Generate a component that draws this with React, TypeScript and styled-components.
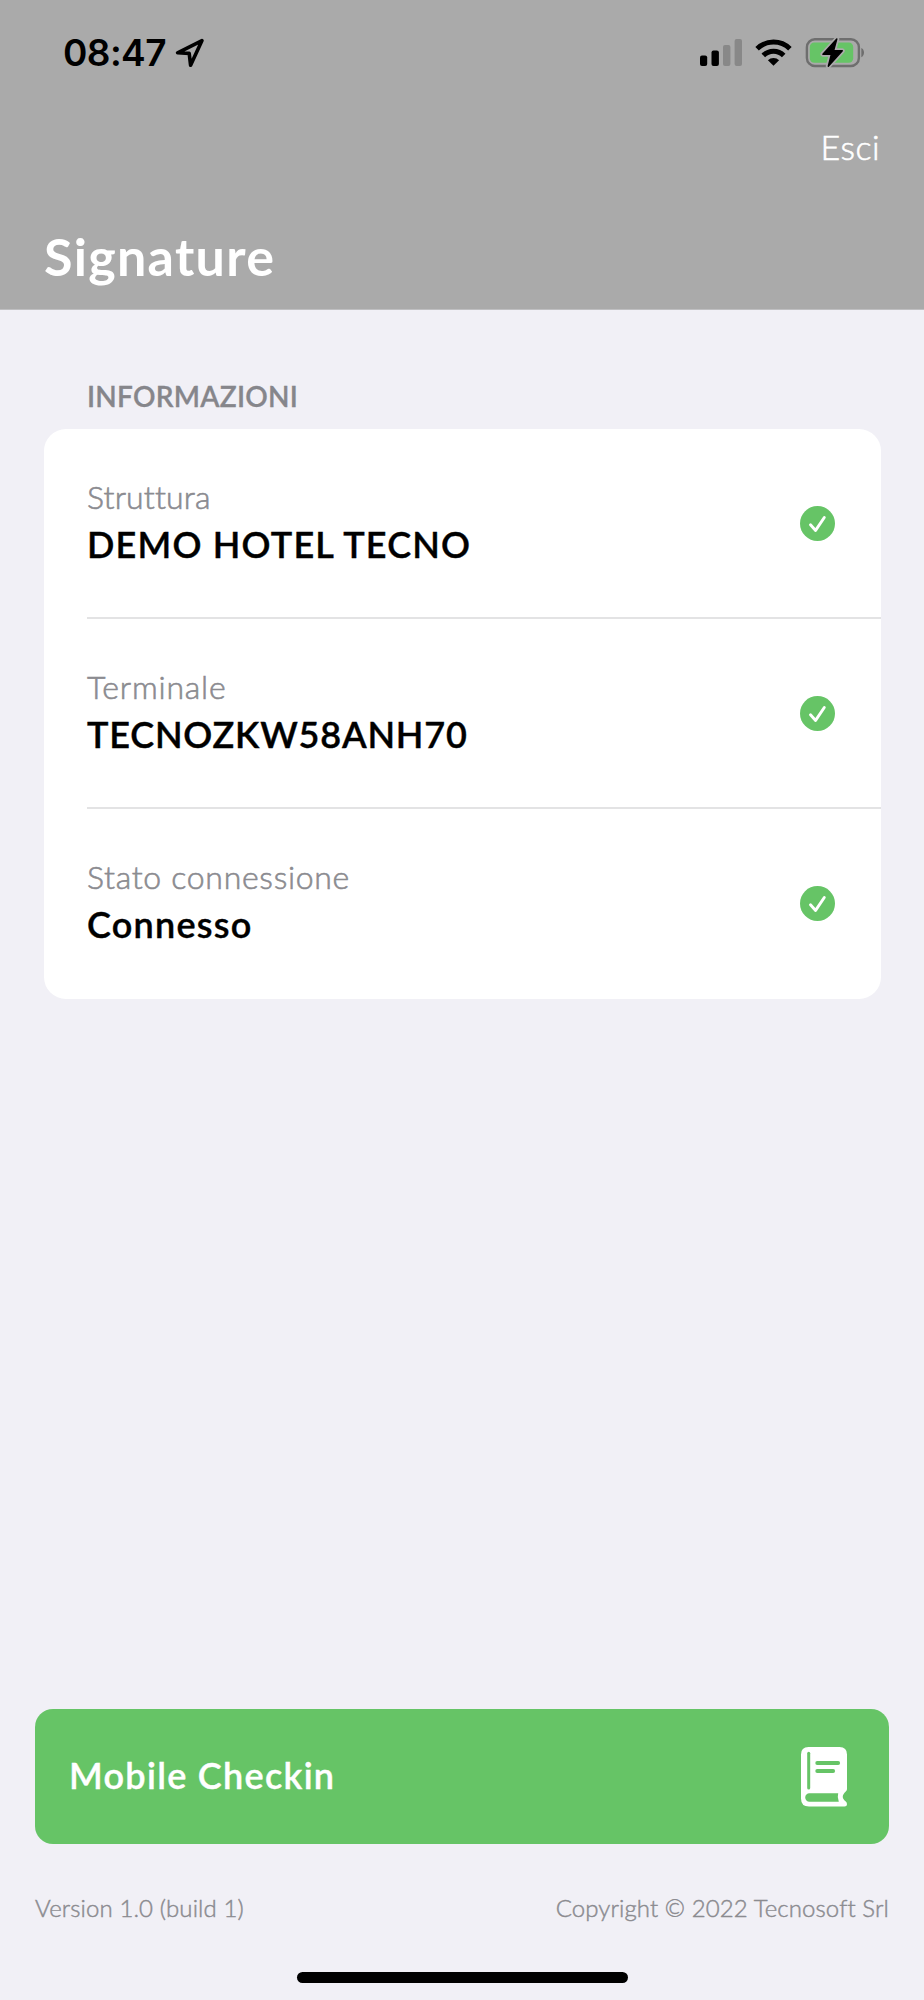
import React from 'react';
import styled, { createGlobalStyle } from 'styled-components';

const GREEN = '#66c466';

const GlobalStyle = createGlobalStyle`
  html, body { margin: 0; padding: 0; background: #f1f0f6; }
  *, *::before, *::after { box-sizing: border-box; }
`;

const Screen = styled.div`
  display: flex;
  flex-direction: column;
  width: 924px;
  height: 2000px;
  background: #f1f0f6;
  font-family: Lato, 'Liberation Sans', sans-serif;
  font-variant-ligatures: none;
  white-space: nowrap;
`;

const Header = styled.header`
  display: flex;
  flex-direction: column;
  height: 310px;
  background: #aaaaaa;
  border-bottom: 1px solid #bfbfc1;
`;

const StatusBar = styled.div`
  display: flex;
  justify-content: space-between;
  align-items: center;
  height: 105px;
  padding: 0 59px 0 63px;
`;

const StatusGroup = styled.div<{ $gap: number }>`
  display: flex;
  align-items: center;
  gap: ${(p) => p.$gap}px;
`;

const Clock = styled.span`
  font: 600 37px/44px Inter, 'Liberation Sans', sans-serif;
  letter-spacing: -0.6px;
  color: #000;
`;

const NavBar = styled.nav`
  display: flex;
  justify-content: flex-end;
  align-items: flex-end;
  height: 62px;
  padding-right: 44px;
`;

const ExitButton = styled.button`
  padding: 0;
  border: 0;
  background: none;
  color: #fff;
  font: 300 34px/40px Lato, sans-serif;
  letter-spacing: 0.5px;
  -webkit-text-stroke: 0.6px #fff;
`;

const PageTitle = styled.h1`
  margin: 59px 0 0 44px;
  color: #fff;
  font-size: 52px;
  font-weight: 700;
  line-height: 60px;
  letter-spacing: 1.3px;
`;

const Content = styled.main`
  flex: 1;
  padding: 69px 43px 0 44px;
`;

const SectionTitle = styled.h2`
  margin: 0 0 16px 43px;
  color: #86868b;
  font-size: 28px;
  font-weight: 600;
  line-height: 34px;
  letter-spacing: 0.25px;
  -webkit-text-stroke: 0.3px #86868b;
`;

const Card = styled.section`
  border-radius: 22px;
  background: #fff;
  padding-left: 43px;
`;

const Row = styled.div`
  display: flex;
  justify-content: space-between;
  align-items: center;
  height: 190px;
  padding-right: 46px;
  border-bottom: 2px solid #e3e3e4;
  &:last-child {
    border-bottom-color: transparent;
  }
`;

const RowText = styled.div`
  display: flex;
  flex-direction: column;
  gap: 3px;
  padding-bottom: 1px;
`;

const Label = styled.span<{ $tracking: number }>`
  color: #8b8b90;
  font-size: 32px;
  font-weight: 300;
  line-height: 40px;
  letter-spacing: ${(p) => p.$tracking}px;
  -webkit-text-stroke: 0.6px #8b8b90;
`;

const Value = styled.span<{ $tracking: number }>`
  color: #000;
  font-size: 36px;
  font-weight: 600;
  line-height: 48px;
  letter-spacing: ${(p) => p.$tracking}px;
  -webkit-text-stroke: 0.4px #000;
`;

const BottomArea = styled.footer`
  display: flex;
  flex-direction: column;
  align-items: stretch;
  height: 291px;
  padding: 0 35px;
`;

const PrimaryButton = styled.button`
  display: flex;
  justify-content: space-between;
  align-items: center;
  height: 135px;
  padding: 0 41px 0 34px;
  border: 0;
  border-radius: 18px;
  background: ${GREEN};
  color: #fff;
`;

const ButtonLabel = styled.span`
  padding-bottom: 3px;
  font: 600 36px/48px Lato, sans-serif;
  letter-spacing: 1.3px;
  -webkit-text-stroke: 0.4px #fff;
`;

const Legal = styled.div`
  display: flex;
  justify-content: space-between;
  margin-top: 49px;
  color: #8b8b90;
  font-size: 24px;
  font-weight: 300;
  line-height: 30px;
  letter-spacing: 0.1px;
  -webkit-text-stroke: 0.45px #8b8b90;
`;

const HomeIndicator = styled.div`
  align-self: center;
  width: 331px;
  height: 11px;
  margin-top: 49px;
  border-radius: 6px;
  background: #000;
`;

const LocationArrow = () => (
  <svg width="30" height="30" viewBox="0 0 30 30" fill="none" stroke="#000" strokeWidth="3.6" strokeLinejoin="round">
    <path d="M27 2.6 L2.6 14.8 L14.2 15.4 L15.6 27.2 Z" />
  </svg>
);

const Signal = () => (
  <svg width="42" height="28" viewBox="0 0 42 28">
    <rect x="0" y="16.5" width="7.2" height="10.5" rx="2" fill="#000" />
    <rect x="11.5" y="11.5" width="7.4" height="15.5" rx="2" fill="#000" />
    <rect x="23" y="6" width="7.4" height="21" rx="2" fill="#888" />
    <rect x="34.6" y="0" width="7.4" height="27" rx="2" fill="#888" />
  </svg>
);

const Wifi = () => (
  <svg width="37" height="28" viewBox="0 0 37 28">
    <g fill="none" stroke="#000" strokeWidth="5">
      <path d="M2.1 9.8 A23.4 23.4 0 0 1 34.9 9.8" />
      <path d="M8.3 16.4 A14.4 14.4 0 0 1 28.7 16.4" />
    </g>
    <path d="M18.5 26.8 L12.9 21.3 A8 8 0 0 1 24.1 21.3 Z" fill="#000" />
  </svg>
);

const Battery = () => (
  <svg width="60" height="31" viewBox="0 0 60 31">
    <rect x="1.9" y="2.2" width="52" height="26.8" rx="8" fill="none" stroke="#6e6e6e" strokeWidth="2.4" />
    <rect x="4.8" y="5.4" width="43.4" height="20.4" rx="4.5" fill={GREEN} />
    <path d="M56.3 11 C59.9 12.4 59.9 18.8 56.3 20.2 Z" fill="#6e6e6e" />
    <path
      d="M31.8 2.2 L17.9 17.2 H26.4 L23.3 29 L37.3 13.8 H28.6 Z"
      fill="#aaa"
      stroke="#aaa"
      strokeWidth="5"
      strokeLinejoin="round"
    />
    <path
      d="M31.8 2 L17.9 17.2 H26.4 L23.3 29.2 L37.3 13.8 H28.6 Z"
      fill="#000"
      stroke="#000"
      strokeWidth="1.4"
      strokeLinejoin="round"
    />
  </svg>
);

const CheckBadge = () => (
  <svg width="35" height="35" viewBox="0 0 35 35">
    <circle cx="17.5" cy="17.5" r="17.5" fill={GREEN} />
    <path d="M10.5 18.8 L15.6 24.4 L24.3 11.5" fill="none" stroke="#fff" strokeWidth="2.9" strokeLinecap="round" strokeLinejoin="round" />
  </svg>
);

const Book = () => (
  <svg width="47" height="60" viewBox="0 0 47 60">
    <path
      fill="#fff"
      d="M7.5 0 H38.5 Q46 0 46 7.5 V42 Q46 43.2 45 44.2 C40.5 48.5 41 51.5 44.5 54.3 Q46 55.5 46 57.2 Q46 59.5 43.5 59.5 H8 Q0 59.5 0 51.5 V7.5 Q0 0 7.5 0 Z"
    />
    <path fill={GREEN} d="M8.4 46.3 H37.2 Q36 50.5 37.8 54.7 H8.4 A4.2 4.2 0 0 1 8.4 46.3 Z" />
    <g stroke={GREEN} strokeLinecap="round" fill="none">
      <path d="M7.7 6.3 V41" strokeWidth="3" />
      <path d="M16.2 16 H37.2" strokeWidth="3.8" />
      <path d="M16.2 24 H32.2" strokeWidth="3.8" />
    </g>
  </svg>
);

const rows = [
  { label: 'Struttura', value: 'DEMO HOTEL TECNO', labelTracking: 0.15, valueTracking: 1.2 },
  { label: 'Terminale', value: 'TECNOZKW58ANH70', labelTracking: 0.8, valueTracking: 0.8 },
  { label: 'Stato connessione', value: 'Connesso', labelTracking: 0.7, valueTracking: 1.25 },
];

export default function App() {
  return (
    <Screen>
      <GlobalStyle />
      <Header>
        <StatusBar>
          <StatusGroup $gap={9}>
            <Clock>08:47</Clock>
            <LocationArrow />
          </StatusGroup>
          <StatusGroup $gap={13}>
            <Signal />
            <Wifi />
            <Battery />
          </StatusGroup>
        </StatusBar>
        <NavBar>
          <ExitButton>Esci</ExitButton>
        </NavBar>
        <PageTitle>Signature</PageTitle>
      </Header>
      <Content>
        <SectionTitle>INFORMAZIONI</SectionTitle>
        <Card>
          {rows.map((row) => (
            <Row key={row.label}>
              <RowText>
                <Label $tracking={row.labelTracking}>{row.label}</Label>
                <Value $tracking={row.valueTracking}>{row.value}</Value>
              </RowText>
              <CheckBadge />
            </Row>
          ))}
        </Card>
      </Content>
      <BottomArea>
        <PrimaryButton>
          <ButtonLabel>Mobile Checkin</ButtonLabel>
          <Book />
        </PrimaryButton>
        <Legal>
          <span>Version 1.0 (build 1)</span>
          <span>Copyright © 2022 Tecnosoft Srl</span>
        </Legal>
        <HomeIndicator />
      </BottomArea>
    </Screen>
  );
}
